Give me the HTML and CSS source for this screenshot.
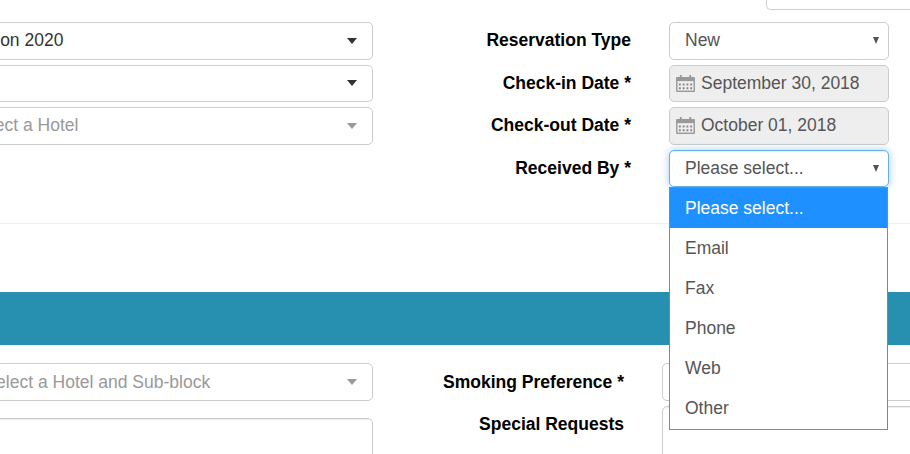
FILE: index.html
```html
<!DOCTYPE html>
<html lang="en">
<head>
<meta charset="utf-8">
<title>Reservation</title>
<link rel="stylesheet" href="styles.css">
</head>
<body>
<div class="page">
  <div class="top-strip"><div class="top-box"></div></div>
  <section class="form-section upper">
    <div class="left-col">
      <div class="combo"><span class="combo-text value">Fall Convention 2020</span><i class="caret"></i></div>
      <div class="combo"><span class="combo-text"></span><i class="caret"></i></div>
      <div class="combo"><span class="combo-text muted hotel">Please select a Hotel</span><i class="caret light"></i></div>
    </div>
    <div class="right-col">
      <div class="field-row">
        <label class="field-label">Reservation Type</label>
        <div class="select"><span>New</span><i class="mini-arrow"></i></div>
      </div>
      <div class="field-row">
        <label class="field-label">Check-in Date *</label>
        <div class="date">
          <svg class="cal" viewBox="0 0 20 18" aria-hidden="true"><path fill="#999" d="M1 2h3V0h2v2h8V0h2v2h3a1 1 0 0 1 1 1v14a1 1 0 0 1-1 1H1a1 1 0 0 1-1-1V3a1 1 0 0 1 1-1z"/><path fill="#eee" d="M1.5 6.5h17v10h-17z"/><path fill="#888" d="M3 9h2v2H3zM7 9h2v2H7zM11 9h2v2h-2zM15 9h2v2h-2zM3 13h2v2H3zM7 13h2v2H7zM11 13h2v2h-2zM15 13h2v2h-2z"/></svg>
          <span>September 30, 2018</span>
        </div>
      </div>
      <div class="field-row">
        <label class="field-label">Check-out Date *</label>
        <div class="date">
          <svg class="cal" viewBox="0 0 20 18" aria-hidden="true"><path fill="#999" d="M1 2h3V0h2v2h8V0h2v2h3a1 1 0 0 1 1 1v14a1 1 0 0 1-1 1H1a1 1 0 0 1-1-1V3a1 1 0 0 1 1-1z"/><path fill="#eee" d="M1.5 6.5h17v10h-17z"/><path fill="#888" d="M3 9h2v2H3zM7 9h2v2H7zM11 9h2v2h-2zM15 9h2v2h-2zM3 13h2v2H3zM7 13h2v2H7zM11 13h2v2h-2zM15 13h2v2h-2z"/></svg>
          <span>October 01, 2018</span>
        </div>
      </div>
      <div class="field-row">
        <label class="field-label">Received By *</label>
        <div class="select-wrap">
          <div class="select focus"><span>Please select...</span><i class="mini-arrow"></i></div>
          <ul class="menu">
            <li class="active">Please select...</li>
            <li>Email</li>
            <li>Fax</li>
            <li>Phone</li>
            <li>Web</li>
            <li>Other</li>
          </ul>
        </div>
      </div>
    </div>
  </section>
  <hr class="rule">
  <div class="band"></div>
  <section class="form-section lower">
    <div class="left-col">
      <div class="combo"><span class="combo-text muted sub-block">Please select a Hotel and Sub-block</span><i class="caret light"></i></div>
      <div class="text-area left-area"></div>
    </div>
    <div class="right-col wide">
      <div class="field-row">
        <label class="field-label">Smoking Preference *</label>
        <div class="plain-input"></div>
      </div>
      <div class="field-row">
        <label class="field-label requests-label">Special Requests</label>
        <div class="text-area right-area"></div>
      </div>
    </div>
  </section>
</div>
</body>
</html>
```

FILE: styles.css
```css
* { box-sizing: border-box; }
html, body { margin: 0; padding: 0; }
body {
  width: 910px;
  height: 454px;
  overflow: hidden;
  background: #fff;
  font-family: "Liberation Sans", Arial, sans-serif;
  font-size: 17.5px;
  color: #333;
}
.page { width: 910px; height: 454px; overflow: hidden; }

.top-strip { height: 22px; display: flex; justify-content: flex-end; align-items: flex-start; }
.top-box {
  width: 144px;
  height: 10px;
  border: 1px solid #ccc;
  border-top: 0;
  border-right: 0;
  border-radius: 0 0 0 5px;
}

.form-section { display: flex; }
.left-col {
  flex: none;
  width: 493px;
  margin-left: -120px;
  display: flex;
  flex-direction: column;
  gap: 5px;
}
.right-col { flex: none; display: flex; flex-direction: column; gap: 5px; position: relative; }

.combo {
  height: 37.5px;
  display: flex;
  align-items: center;
  justify-content: space-between;
  padding: 0 15px 0 30px;
  border: 1px solid #ccc;
  border-radius: 5px;
  background: #fff;
}
.combo-text { white-space: nowrap; }
.value { color: #333; margin-left: -13px; }
.muted { color: #999; }
.hotel { margin-left: 3px; }
.sub-block { margin-left: 18px; padding-top: 1px; }
.caret {
  display: block;
  border-style: solid;
  border-width: 6px 5px 0;
  border-color: #333 transparent transparent;
}
.caret.light { border-top-color: #999; }

.field-row { display: flex; align-items: flex-start; gap: 38px; }
.field-label {
  width: 258px;
  height: 37.5px;
  line-height: 37px;
  text-align: right;
  font-weight: 700;
  color: #000;
  white-space: nowrap;
}

.select, .date {
  width: 220px;
  height: 37.5px;
  display: flex;
  align-items: center;
  border: 1px solid #ccc;
  border-radius: 5px;
  color: #555;
}
.select { justify-content: space-between; padding: 0 9px 0 15px; background: #fff; }
.select.focus {
  border-color: #66afe9;
  box-shadow: inset 0 1px 1px rgba(0,0,0,.075), 0 0 8px rgba(102,175,233,.6);
}
.mini-arrow {
  display: block;
  border-style: solid;
  border-width: 7px 3.5px 0;
  border-color: #555 transparent transparent;
}
.date { background: #eee; padding-left: 6px; gap: 6px; }
.cal { width: 19px; height: 17px; flex: none; }

.select-wrap { position: relative; width: 220px; height: 37.5px; }
.menu {
  position: absolute;
  top: 37.5px;
  left: 0;
  width: 219px;
  margin: 0;
  padding: 0 0 1px;
  list-style: none;
  background: #fff;
  border: 1px solid #7088b8;
  z-index: 5;
}
.menu li { height: 40px; line-height: 40px; padding-left: 15px; color: #555; }
.menu li.active { background: #1e90ff; color: #fff; }

.rule { margin: 36px 0 0; border: 0; border-top: 1px solid #eee; }
.band { height: 53px; margin-top: 68px; background: #2790b0; }

.lower { margin-top: 18px; }
.left-area { margin-top: 12px; }
.text-area {
  height: 80px;
  border: 1px solid #ccc;
  border-radius: 5px;
  box-shadow: inset 0 1px 1px rgba(0,0,0,.075);
}
.wide .field-label { width: 251px; line-height: 38px; }
.wide .requests-label { line-height: 36px; }
.plain-input { width: 300px; height: 37.5px; border: 1px solid #ccc; border-radius: 5px; }
.right-area { width: 300px; }
```
